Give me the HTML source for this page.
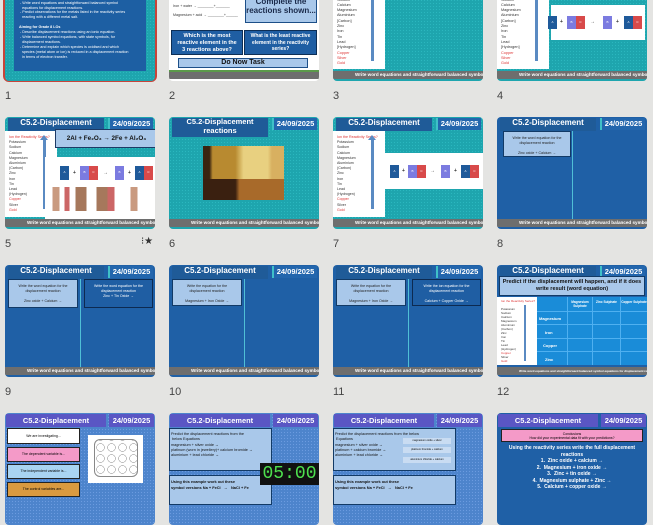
<!DOCTYPE html>
<html><head><meta charset="utf-8"><style>
*{margin:0;padding:0;box-sizing:border-box}
body{width:653px;height:490px;background:#e4e4e2;position:relative;overflow:hidden;font-family:"Liberation Sans",sans-serif}
.s{position:absolute;width:150px;height:112px;border-radius:4px;overflow:hidden;background:#1ea5ae}
.teal{background:#1ea5ae;background-image:radial-gradient(#2bb7bf 0.6px,transparent 0.8px);background-size:3px 3px}
.navy{background:#1f60a6}
.purp{background:#4d84cc;background-image:radial-gradient(#6b9be0 0.6px,transparent 0.8px);background-size:3px 3px}
.a{position:absolute}
.t{position:absolute;left:3px;top:1px;width:96px;height:13px;background:#1f5b98;color:#fff;font-weight:bold;font-size:8px;text-align:center;line-height:10px;overflow:hidden}
.d{position:absolute;left:103px;top:1px;width:45px;height:12px;background:#2366ad;border-left:2px solid #3fc0c8;color:#fff;font-weight:bold;font-size:7.5px;text-align:center;line-height:12px}
.f{position:absolute;left:0;top:102px;width:150px;height:8px;background:#6e6e6e;color:#fff;font-size:4.6px;font-weight:bold;line-height:8px;padding-left:22px;white-space:nowrap;overflow:hidden}
.pt .t,.pt .d{background:#5a56c4;border:none;color:#fff}
.pt .t{left:1px;width:100px;font-size:7.4px;line-height:13px}
.pt .d{left:104px;width:45px;line-height:13px;height:13px}
.n{position:absolute;font-size:11px;color:#444}
.rs{position:absolute;left:0;top:14px;width:52px;height:86px;background:#fff;font-size:3.8px;line-height:5.3px;color:#333;padding:4px 0 0 4px}
.rs i{color:#d33;font-style:normal}
.arr{position:absolute;left:38px;top:22px;width:3px;height:70px;background:#5a8ac2}
.arr:before{content:"";position:absolute;left:-3px;top:-4px;border:4.5px solid transparent;border-bottom:5px solid #5a8ac2;border-top:0}
.box{position:absolute;width:9px;height:13px;font-size:3px;color:#fff;text-align:center;line-height:13px}
.lb{position:absolute;background:#a9c8ea;border:1.5px solid #123a66;font-size:3.6px;color:#222;text-align:center;line-height:5px;padding-top:4px}
.vl{position:absolute;left:75px;top:14px;width:1px;height:88px;background:#4fbfd6}
.pl{position:absolute;font-size:5px;font-weight:bold;color:#333}
</style></head><body>

<!-- Row 1 -->
<div class="a" style="left:3px;top:-33px;width:154px;height:115px;border:2px solid #c8443a;border-radius:6px"></div>
<div class="s teal" style="left:5px;top:-31px">
 <div class="a" style="left:9px;top:8px;width:132px;height:94px;background:#1d5fa3;color:#fff;font-size:3.7px;line-height:4.9px;padding:4px 5px">
 &nbsp;- Apply in the real world...<br>&nbsp;- Explain why a displacement reaction occurs.<br><b>Aiming for Grade 6 LOs</b><br>&nbsp;- Explain why a displacement reaction occurs.<br>&nbsp;- Write word equations and straightforward balanced symbol<br>&nbsp;&nbsp;&nbsp;equations for displacement reactions.<br>&nbsp;- Predict observations for the metals listed in the reactivity series<br>&nbsp;&nbsp;&nbsp;reacting with a different metal salt.<br><br><b>Aiming for Grade 8 LOs</b><br>&nbsp;- Describe displacement reactions using an ionic equation.<br>&nbsp;- Write balanced symbol equations, with state symbols, for<br>&nbsp;&nbsp;&nbsp;displacement reactions.<br>&nbsp;- Determine and explain which species is oxidised and which<br>&nbsp;&nbsp;&nbsp;species (metal atom or ion) is reduced in a displacement reaction<br>&nbsp;&nbsp;&nbsp;in terms of electron transfer.
 </div>
</div>
<div class="n" style="left:5px;top:90px">1</div>

<div class="s" style="left:169px;top:-31px;background:#fff">
 <div class="a" style="left:4px;top:33px;font-size:3.6px;color:#333;line-height:9px">Iron + water → ________+_______<br>Magnesium + acid → ________+______</div>
 <div class="a" style="left:76px;top:24px;width:72px;height:30px;background:#a9c8ea;border:1px solid #1d4f88;font-size:8px;font-weight:bold;text-align:center;color:#1a2a4a;line-height:9px;padding-top:3px">Complete the<br>reactions shown...</div>
 <div class="a" style="left:2px;top:61px;width:72px;height:25px;background:#1f5ea3;border:1px solid #0d2e55;font-size:5.5px;font-weight:bold;color:#fff;text-align:center;line-height:7px;padding-top:2px">Which is the most<br>reactive element in the<br>3 reactions above?</div>
 <div class="a" style="left:75px;top:61px;width:73px;height:25px;background:#1f5ea3;border:1px solid #0d2e55;font-size:5px;font-weight:bold;color:#fff;text-align:center;line-height:6.6px;padding-top:2px">What is the least reactive<br>element in the reactivity<br>series?</div>
 <div class="a" style="left:9px;top:89px;width:130px;height:10px;background:#a9c8ea;border:1px solid #1d4f88;font-size:7px;font-weight:bold;text-align:center;line-height:8px;color:#111">Do Now Task</div>
 <div class="a" style="left:0;top:101px;width:150px;height:2px;background:#5b9a4a"></div>
 <div class="f" style="top:103px;height:7px;font-size:2.5px"></div>
</div>
<div class="n" style="left:169px;top:90px">2</div>

<div class="s teal" style="left:333px;top:-31px">
 <div class="rs"><br><br>Sodium<br>Calcium<br>Magnesium<br>Aluminium<br>[Carbon]<br>Zinc<br>Iron<br>Tin<br>Lead<br>[Hydrogen]<br><i>Copper</i><br><i>Silver</i><br><i>Gold</i></div>
 <div class="arr"></div>
 <div class="f">Write word equations and straightforward balanced symbol</div>
</div>
<div class="n" style="left:333px;top:90px">3</div>

<div class="s teal" style="left:497px;top:-31px">
 <div class="rs"><br><br>Sodium<br>Calcium<br>Magnesium<br>Aluminium<br>[Carbon]<br>Zinc<br>Iron<br>Tin<br>Lead<br>[Hydrogen]<br><i>Copper</i><br><i>Silver</i><br><i>Gold</i></div>
 <div class="arr"></div>
 <div class="a" style="left:54px;top:36px;width:94px;height:35px;background:#fff"></div>
 <div class="box" style="left:51px;top:47px;background:#1f5a9a">A</div>
 <div class="pl" style="left:63px;top:50px">+</div>
 <div class="box" style="left:70px;top:47px;background:#7b7be0">B</div><div class="box" style="left:79px;top:47px;background:#d84a4a">C</div>
 <div class="pl" style="left:93px;top:50px">→</div>
 <div class="box" style="left:106px;top:47px;background:#7b7be0">B</div>
 <div class="pl" style="left:119px;top:50px">+</div>
 <div class="box" style="left:127px;top:47px;background:#1f5a9a">A</div><div class="box" style="left:136px;top:47px;background:#d84a4a">C</div>
 <div class="f">Write word equations and straightforward balanced symbol</div>
</div>
<div class="n" style="left:497px;top:90px">4</div>

<!-- Row 2 -->
<div class="s teal" style="left:5px;top:117px">
 <div class="t">C5.2-Displacement</div><div class="d">24/09/2025</div>
 <div class="rs" style="font-size:3.6px;line-height:5.2px"><i>Ion the Reactivity Series?</i><br>Potassium<br>Sodium<br>Calcium<br>Magnesium<br>Aluminium<br>(Carbon)<br>Zinc<br>Iron<br>Tin<br>Lead<br>(Hydrogen)<br><i>Copper</i><br>Silver<br><i>Gold</i></div>
 <div class="arr"></div>
 <div class="a" style="left:40px;top:40px;width:110px;height:62px;background:#fff"></div>
 <div class="a" style="left:50px;top:12px;width:103px;height:19px;background:#a9c8ea;border:1px solid #1d3a66;font-size:6.3px;font-weight:bold;text-align:center;line-height:17px;color:#111;white-space:nowrap">2Al + Fe₂O₃ → 2Fe + Al₂O₃</div>
 <div class="box" style="left:55px;top:49px;background:#1f5a9a;height:14px">A</div>
 <div class="pl" style="left:68px;top:53px">+</div>
 <div class="box" style="left:75px;top:49px;background:#7b7be0;height:14px">B</div><div class="box" style="left:84px;top:49px;background:#d84a4a;height:14px">C</div>
 <div class="pl" style="left:98px;top:53px">→</div>
 <div class="box" style="left:110px;top:49px;background:#7b7be0;height:14px">B</div>
 <div class="pl" style="left:123px;top:53px">+</div>
 <div class="box" style="left:130px;top:49px;background:#1f5a9a;height:14px">A</div><div class="box" style="left:139px;top:49px;background:#d84a4a;height:14px">C</div>
 <div class="a" style="left:45px;top:70px;width:100px;height:24px;background:linear-gradient(90deg,#fff 0 2%,#c99a80 3% 9%,#fff 10% 14%,#c66 15% 19%,#fff 20% 25%,#a6785c 26% 36%,#fff 37% 46%,#a6785c 47% 57%,#c66 58% 64%,#fff 65% 80%,#c99a80 81% 87%,#fff 88%)"></div>
 <div class="f">Write word equations and straightforward balanced symbol</div>
</div>
<div class="n" style="left:5px;top:238px">5</div>
<div class="n" style="left:141px;top:236px;font-size:10px;color:#333">⁝★</div>

<div class="s teal" style="left:169px;top:117px">
 <div class="t" style="height:19px;font-size:7.5px;line-height:8.5px">C5.2-Displacement<br>reactions</div><div class="d">24/09/2025</div>
 <div class="a" style="left:34px;top:29px;width:81px;height:54px;background:linear-gradient(90deg,#3a2410 0 8%,#b88a30 12% 40%,#e8d080 50% 80%,#d8b060 85%);"></div>
 <div class="a" style="left:34px;top:62px;width:81px;height:21px;background:linear-gradient(90deg,#3a2010 0 40%,#a86a2a 45% 100%)"></div>
 <div class="f">Write word equations and straightforward balanced symbol</div>
</div>
<div class="n" style="left:169px;top:238px">6</div>

<div class="s teal" style="left:333px;top:117px">
 <div class="t">C5.2-Displacement</div><div class="d">24/09/2025</div>
 <div class="rs" style="font-size:3.6px;line-height:5.2px"><i>Ion the Reactivity Series?</i><br>Potassium<br>Sodium<br>Calcium<br>Magnesium<br>Aluminium<br>(Carbon)<br>Zinc<br>Iron<br>Tin<br>Lead<br>(Hydrogen)<br><i>Copper</i><br>Silver<br><i>Gold</i></div>
 <div class="arr"></div>
 <div class="a" style="left:52px;top:36px;width:98px;height:36px;background:#fff"></div>
 <div class="box" style="left:57px;top:48px;background:#1f5a9a">A</div>
 <div class="pl" style="left:69px;top:51px">+</div>
 <div class="box" style="left:75px;top:48px;background:#7b7be0">B</div><div class="box" style="left:84px;top:48px;background:#d84a4a">C</div>
 <div class="pl" style="left:97px;top:51px">→</div>
 <div class="box" style="left:108px;top:48px;background:#7b7be0">B</div>
 <div class="pl" style="left:121px;top:51px">+</div>
 <div class="box" style="left:128px;top:48px;background:#1f5a9a">A</div><div class="box" style="left:137px;top:48px;background:#d84a4a">C</div>
 <div class="f">Write word equations and straightforward balanced symbol</div>
</div>
<div class="n" style="left:333px;top:238px">7</div>

<div class="s navy" style="left:497px;top:117px">
 <div class="t">C5.2-Displacement</div><div class="d">24/09/2025</div>
 <div class="vl"></div>
 <div class="lb" style="left:6px;top:14px;width:68px;height:26px">Write the word equation for the<br>displacement reaction<br><br>Zinc oxide + Calcium →</div>
 <div class="f">Write word equations and straightforward balanced symbol</div>
</div>
<div class="n" style="left:497px;top:238px">8</div>

<!-- Row 3 -->
<div class="s navy" style="left:5px;top:265px">
 <div class="t">C5.2-Displacement</div><div class="d">24/09/2025</div>
 <div class="vl"></div>
 <div class="lb" style="left:3px;top:14px;width:70px;height:29px">Write the word equation for the<br>displacement reaction<br><br>Zinc oxide + Calcium →</div>
 <div class="lb" style="left:79px;top:14px;width:69px;height:29px;background:#1f5ea3;color:#fff;border-color:#0d2a50">Write the word equation for the<br>displacement reaction<br>Zinc + Tin Oxide →</div>
 <div class="f">Write word equations and straightforward balanced symbol</div>
</div>
<div class="n" style="left:5px;top:386px">9</div>

<div class="s navy" style="left:169px;top:265px">
 <div class="t">C5.2-Displacement</div><div class="d">24/09/2025</div>
 <div class="vl"></div>
 <div class="lb" style="left:3px;top:14px;width:70px;height:27px">Write the equation for the<br>displacement reaction<br><br>Magnesium + Iron Oxide →</div>
 <div class="f">Write word equations and straightforward balanced symbol</div>
</div>
<div class="n" style="left:169px;top:386px">10</div>

<div class="s navy" style="left:333px;top:265px">
 <div class="t">C5.2-Displacement</div><div class="d">24/09/2025</div>
 <div class="vl"></div>
 <div class="lb" style="left:3px;top:14px;width:70px;height:27px">Write the equation for the<br>displacement reaction<br><br>Magnesium + Iron Oxide →</div>
 <div class="lb" style="left:79px;top:14px;width:69px;height:27px;background:#1f5ea3;color:#fff;border-color:#0d2a50">Write the ion equation for the<br>displacement reaction<br><br>Calcium + Copper Oxide →</div>
 <div class="f">Write word equations and straightforward balanced symbol</div>
</div>
<div class="n" style="left:333px;top:386px">11</div>

<div class="s navy" style="left:497px;top:265px">
 <div class="t">C5.2-Displacement</div><div class="d">24/09/2025</div>
 <div class="a" style="left:2px;top:11px;width:146px;height:20px;background:#a9c8ea;border:1.5px solid #123a66;font-size:5.5px;font-weight:bold;text-align:center;line-height:7px;padding-top:2px;color:#111">Predict if the displacement will happen, and if it does<br>write result (word equation)</div>
 <div class="rs" style="top:32px;height:68px;width:40px;font-size:3px;line-height:4px;padding-top:2px"><i>Ion the Reactivity Series?</i><br><br>Potassium<br>Sodium<br>Calcium<br>Magnesium<br>Aluminium<br>(Carbon)<br>Zinc<br>Iron<br>Tin<br>Lead<br>(Hydrogen)<br><i>Copper</i><br>Silver<br><i>Gold</i></div>
 <div class="a" style="left:27px;top:40px;width:2px;height:56px;background:#5a8ac2"></div>
 <div class="a" style="left:40px;top:32px;width:110px;height:68px;background:#1a8cd8;font-size:4px;color:#fff;font-weight:bold">
  <div class="a" style="left:30px;top:0;width:1px;height:68px;background:#4fb0f0"></div>
  <div class="a" style="left:55px;top:0;width:1px;height:68px;background:#4fb0f0"></div>
  <div class="a" style="left:83px;top:0;width:1px;height:68px;background:#4fb0f0"></div>
  <div class="a" style="left:0;top:14px;width:110px;height:1px;background:#4fb0f0"></div>
  <div class="a" style="left:0;top:27px;width:110px;height:1px;background:#4fb0f0"></div>
  <div class="a" style="left:0;top:41px;width:110px;height:1px;background:#4fb0f0"></div>
  <div class="a" style="left:0;top:54px;width:110px;height:1px;background:#4fb0f0"></div>
  <div class="a" style="left:31px;top:3px;width:24px;text-align:center;font-size:3.2px">Magnesium Sulphate</div>
  <div class="a" style="left:56px;top:3px;width:27px;text-align:center;font-size:3.2px">Zinc Sulphate</div>
  <div class="a" style="left:84px;top:3px;width:26px;text-align:center;font-size:3.2px">Copper Sulphate</div>
  <div class="a" style="left:2px;top:19px">Magnesium</div>
  <div class="a" style="left:8px;top:33px">Iron</div>
  <div class="a" style="left:6px;top:46px">Copper</div>
  <div class="a" style="left:8px;top:60px">Zinc</div>
 </div>
 <div class="f" style="font-size:3px">Write word equations and straightforward balanced symbol equations for displacement reactions</div>
</div>
<div class="n" style="left:497px;top:386px">12</div>

<!-- Row 4 -->
<div class="s purp pt" style="left:5px;top:413px">
 <div class="t">C5.2-Displacement reactions</div><div class="d">24/09/2025</div>
 <div class="a" style="left:2px;top:15px;width:73px;height:16px;background:#fff;border:1px solid #222;font-size:3.5px;text-align:center;line-height:14px">We are investigating...</div>
 <div class="a" style="left:2px;top:34px;width:73px;height:15px;background:#f49ac8;border:1px solid #222;font-size:3.5px;text-align:center;line-height:13px">The dependent variable is...</div>
 <div class="a" style="left:2px;top:51px;width:73px;height:15px;background:#a9d4f2;border:1px solid #222;font-size:3.5px;text-align:center;line-height:13px">The independent variable is...</div>
 <div class="a" style="left:2px;top:69px;width:73px;height:15px;background:#d99a40;border:1px solid #222;font-size:3.5px;text-align:center;line-height:13px">The control variables are...</div>
 <div class="a" style="left:83px;top:22px;width:55px;height:48px;background:#fff">
  <div class="a" style="left:6px;top:4px;width:44px;height:38px;border:1px solid #888;border-radius:6px;background-image:radial-gradient(circle,transparent 3.5px,#777 3.8px,transparent 4.3px);background-size:11px 11px;background-position:0 2px"></div>
 </div>
</div>

<div class="s purp pt" style="left:169px;top:413px">
 <div class="t">C5.2-Displacement reactions</div><div class="d">24/09/2025</div>
 <div class="a" style="left:0;top:15px;width:103px;height:43px;background:#a9c8ea;border:1px solid #123a66;font-size:3.8px;line-height:5.3px;padding:3px 0 0 1px;color:#111">Predict the displacement reactions from the<br>&nbsp;below Equations<br>magnesium + silver oxide →<br>platinum (worn in jewellery)+ calcium bromide →<br>aluminium + lead chloride →</div>
 <div class="a" style="left:0;top:62px;width:103px;height:30px;background:#a9c8ea;border:1px solid #123a66;font-size:3.9px;line-height:5.5px;padding:3px 0 0 1px;color:#111;font-weight:bold">Using this example work out these<br>symbol versions Na + FeCl &nbsp; → &nbsp; NaCl + Fe</div>
 <div class="a" style="left:91px;top:50px;width:59px;height:22px;background:#111;color:#4ee04e;font-family:'Liberation Mono',monospace;font-size:18px;line-height:22px;text-align:center">05:00</div>
</div>

<div class="s purp pt" style="left:333px;top:413px">
 <div class="t">C5.2-Displacement reactions</div><div class="d">24/09/2025</div>
 <div class="a" style="left:0;top:15px;width:123px;height:43px;background:#a9c8ea;border:1px solid #123a66;font-size:3.8px;line-height:5.3px;padding:3px 0 0 1px;color:#111">Predict the displacement reactions from the below<br>&nbsp;Equations<br>magnesium + silver oxide →<br>platinum + calcium bromide →<br>aluminium + lead chloride →</div>
 <div class="a" style="left:70px;top:25px;width:48px;height:6px;background:#c9dcf2;font-size:2.6px;line-height:6px;text-align:center">magnesium oxide + silver</div>
 <div class="a" style="left:70px;top:34px;width:48px;height:6px;background:#c9dcf2;font-size:2.6px;line-height:6px;text-align:center">platinum bromide + calcium</div>
 <div class="a" style="left:70px;top:44px;width:48px;height:6px;background:#c9dcf2;font-size:2.6px;line-height:6px;text-align:center">aluminium chloride + calcium</div>
 <div class="a" style="left:0;top:62px;width:123px;height:30px;background:#a9c8ea;border:1px solid #123a66;font-size:3.9px;line-height:5.5px;padding:3px 0 0 1px;color:#111;font-weight:bold">Using this example work out these<br>symbol versions Na + FeCl &nbsp; → &nbsp; NaCl + Fe</div>
</div>

<div class="s pt" style="left:497px;top:413px;background:#1f60a6">
 <div class="t">C5.2-Displacement reactions</div><div class="d">24/09/2025</div>
 <div class="a" style="left:4px;top:16px;width:142px;height:13px;background:#f49ac8;border:1px solid #222;font-size:3.4px;text-align:center;line-height:4.4px;padding-top:1.5px">Conclusions<br>How did your experimental data fit with your predictions?</div>
 <div class="a" style="left:0;top:32px;width:150px;text-align:center;color:#fff;font-weight:bold;font-size:5px;line-height:6.5px">Using the reactivity series write the full displacement<br>reactions<br>1. &nbsp;Zinc oxide + calcium →<br>2. &nbsp;Magnesium + iron oxide →<br>3. &nbsp;Zinc + tin oxide →<br>4. &nbsp;Magnesium sulphate + Zinc →<br>5. &nbsp;Calcium + copper oxide →</div>
</div>
</body></html>
